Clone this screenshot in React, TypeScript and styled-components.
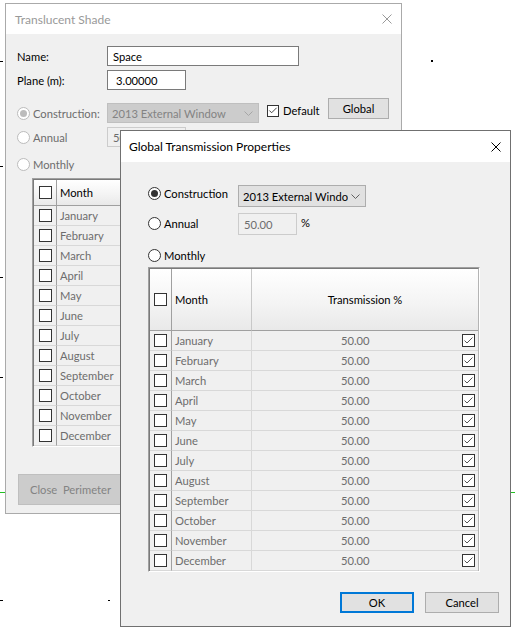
import React from "react";
import styled, { createGlobalStyle, css } from "styled-components";

const FONT = `Lato, "Noto Sans", sans-serif`;

const GlobalStyle = createGlobalStyle`
  html, body { margin: 0; padding: 0; background: #ffffff; }
  body { font-family: ${FONT}; font-size: 11.2px; color: #000000; }
  * { box-sizing: border-box; }
`;

const MONTHS = [
  "January", "February", "March", "April", "May", "June",
  "July", "August", "September", "October", "November", "December",
];

/* ---------- desktop canvas ---------- */

const Desktop = styled.div`
  position: relative;
  width: 515px;
  height: 630px;
  overflow: hidden;
  background: #ffffff;
`;

const Mark = styled.span<{ $x: number; $y: number; $w: number; $h: number; $c?: string }>`
  position: absolute;
  left: ${(p) => p.$x}px;
  top: ${(p) => p.$y}px;
  width: ${(p) => p.$w}px;
  height: ${(p) => p.$h}px;
  background: ${(p) => p.$c ?? "#000000"};
`;

/* ---------- window chrome ---------- */

const Window = styled.section<{ $x: number; $y: number; $w: number; $h: number; $active?: boolean }>`
  position: absolute;
  left: ${(p) => p.$x}px;
  top: ${(p) => p.$y}px;
  width: ${(p) => p.$w}px;
  height: ${(p) => p.$h}px;
  display: flex;
  flex-direction: column;
  background: #f0f0f0;
  border: 1px solid ${(p) => (p.$active ? "#707070" : "#aaaaaa")};
`;

const TitleBar = styled.header<{ $h: number; $active?: boolean }>`
  flex: 0 0 ${(p) => p.$h}px;
  display: flex;
  align-items: center;
  justify-content: space-between;
  padding: 0 9px 0 ${(p) => (p.$active ? 8 : 9)}px;
  background: #ffffff;
  color: ${(p) => (p.$active ? "#000000" : "#999999")};
  font-size: 12px;
`;

const CloseGlyph = ({ color }: { color: string }) => (
  <svg width="10" height="10" viewBox="0 0 10 10">
    <path d="M0.5 0.5 L9.5 9.5 M9.5 0.5 L0.5 9.5" stroke={color} strokeWidth="1" fill="none" />
  </svg>
);

const Body = styled.div<{ $pt: number; $pl: number }>`
  flex: 1;
  display: flex;
  flex-direction: column;
  align-items: flex-start;
  padding: ${(p) => p.$pt}px 0 0 ${(p) => p.$pl}px;
`;

/* ---------- form pieces ---------- */

const Row = styled.div<{ $h: number; $mt?: number; $align?: string }>`
  display: flex;
  align-items: ${(p) => p.$align ?? "center"};
  height: ${(p) => p.$h}px;
  margin-top: ${(p) => p.$mt ?? 0}px;
`;

const FieldLabel = styled.label<{ $w: number; $muted?: boolean; $mt?: number }>`
  display: flex;
  align-items: center;
  gap: 3px;
  width: ${(p) => p.$w}px;
  height: 16px;
  margin-top: ${(p) => p.$mt ?? 0}px;
  flex-shrink: 0;
  color: ${(p) => (p.$muted ? "#6d6d6d" : "#000000")};
  white-space: nowrap;
`;

const Radio = styled.span<{ $checked?: boolean; $disabled?: boolean }>`
  position: relative;
  flex: 0 0 13px;
  width: 13px;
  height: 13px;
  border-radius: 50%;
  border: 1px solid ${(p) => (p.$disabled ? "#bcbcbc" : "#333333")};
  background: #ffffff;
  ${(p) =>
    p.$checked &&
    css`
      &::after {
        content: "";
        position: absolute;
        left: 2px;
        top: 2px;
        width: 7px;
        height: 7px;
        border-radius: 50%;
        background: ${p.$disabled ? "#bcbcbc" : "#333333"};
      }
    `}
`;

const Box = styled.span<{ $size?: number }>`
  display: inline-flex;
  align-items: center;
  justify-content: center;
  flex: 0 0 ${(p) => p.$size ?? 13}px;
  width: ${(p) => p.$size ?? 13}px;
  height: ${(p) => p.$size ?? 13}px;
  border: 1px solid #333333;
  background: #ffffff;
`;

const Check = ({ checked, size, color = "#333333" }: { checked?: boolean; size?: number; color?: string }) => (
  <Box $size={size}>
    {checked && (
      <svg width="11" height="11" viewBox="0 0 11 11">
        <path d="M1.5 5.5 L4 8 L9.5 2.5" stroke={color} strokeWidth="1" fill="none" />
      </svg>
    )}
  </Box>
);

const TextBox = styled.div<{ $w: number; $h: number; $pad: number; $disabled?: boolean }>`
  display: flex;
  align-items: center;
  width: ${(p) => p.$w}px;
  height: ${(p) => p.$h}px;
  padding-left: ${(p) => p.$pad}px;
  border: 1px solid ${(p) => (p.$disabled ? "#cccccc" : "#7a7a7a")};
  background: ${(p) => (p.$disabled ? "#f0f0f0" : "#ffffff")};
  color: ${(p) => (p.$disabled ? "#6d6d6d" : "#000000")};
  white-space: nowrap;
  overflow: hidden;
`;

const Combo = styled.div<{ $w: number; $h: number; $disabled?: boolean; $self?: string }>`
  display: flex;
  align-items: center;
  align-self: ${(p) => p.$self ?? "auto"};
  width: ${(p) => p.$w}px;
  height: ${(p) => p.$h}px;
  padding: 0 5px 0 4px;
  border: 1px solid ${(p) => (p.$disabled ? "#bfbfbf" : "#adadad")};
  background: ${(p) => (p.$disabled ? "#cccccc" : "#e1e1e1")};
  color: ${(p) => (p.$disabled ? "#838383" : "#000000")};
`;

const ComboText = styled.span`
  flex: 1;
  overflow: hidden;
  white-space: nowrap;
`;

const Chevron = ({ color }: { color: string }) => (
  <svg width="9" height="5" viewBox="0 0 9 5" style={{ flexShrink: 0, marginLeft: 3 }}>
    <polyline points="0.5,0.5 4.5,4.5 8.5,0.5" stroke={color} strokeWidth="1" fill="none" />
  </svg>
);

const Button = styled.button<{
  $w: number;
  $h: number;
  $variant?: "default" | "primary" | "disabled";
  $self?: string;
  $ml?: number;
  $mt?: number;
}>`
  display: flex;
  align-items: center;
  justify-content: ${(p) => (p.$variant === "disabled" ? "flex-start" : "center")};
  align-self: ${(p) => p.$self ?? "auto"};
  width: ${(p) => p.$w}px;
  height: ${(p) => p.$h}px;
  margin: ${(p) => p.$mt ?? 0}px 0 0 ${(p) => p.$ml ?? 0}px;
  padding: 0 0 0 ${(p) => (p.$variant === "disabled" ? 11 : 0)}px;
  font: inherit;
  white-space: pre;
  background: ${(p) => (p.$variant === "disabled" ? "#cccccc" : "#e1e1e1")};
  color: ${(p) => (p.$variant === "disabled" ? "#838383" : "#000000")};
  border: ${(p) =>
    p.$variant === "primary"
      ? "2px solid #0078d7"
      : p.$variant === "disabled"
      ? "1px solid #bfbfbf"
      : "1px solid #adadad"};
`;

const DefaultToggle = styled.label`
  display: flex;
  align-items: center;
  gap: 4px;
  width: 61px;
  margin-left: 8px;
  white-space: nowrap;
`;

const Percent = styled.span`
  margin-left: 4px;
  line-height: 20px;
`;

/* ---------- grid table ---------- */

const TableFrame = styled.div<{ $w: number; $mt: number; $ml?: number }>`
  width: ${(p) => p.$w}px;
  margin-top: ${(p) => p.$mt}px;
  margin-left: ${(p) => p.$ml ?? 0}px;
  border: 1px solid;
  border-color: #a0a0a0 #ffffff #ffffff #a0a0a0;
`;

const TableGrid = styled.div<{ $cols: string }>`
  display: grid;
  grid-template-columns: ${(p) => p.$cols};
  border-top: 1px solid #7a7a7a;
  border-left: 1px solid #7a7a7a;
  border-right: 1px solid #b4b4b4;
  background: #f0f0f0;
`;

const HeadCell = styled.div<{ $h: number; $center?: boolean; $last?: boolean }>`
  display: flex;
  align-items: center;
  justify-content: ${(p) => (p.$center ? "center" : "flex-start")};
  height: ${(p) => p.$h}px;
  padding-left: ${(p) => (p.$center ? 0 : 3)}px;
  background: linear-gradient(#ffffff, #f4f4f4 55%, #e9e9e9);
  border-bottom: 1px solid #a0a0a0;
  border-right: ${(p) => (p.$last ? "none" : "1px solid #c8c8c8")};
  color: #000000;
  white-space: nowrap;
`;

const HeadCheckCell = styled(HeadCell)`
  justify-content: center;
  padding-left: 0;
  border-right: 1px solid #a0a0a0;
`;

const Cell = styled.div<{ $muted?: boolean; $center?: boolean; $last?: boolean }>`
  display: flex;
  align-items: center;
  justify-content: ${(p) => (p.$center ? "center" : "flex-start")};
  height: 20px;
  padding-left: ${(p) => (p.$center ? 0 : 3)}px;
  border-bottom: 1px solid #d8d8d8;
  border-right: ${(p) => (p.$last ? "none" : "1px solid #d8d8d8")};
  color: ${(p) => (p.$muted ? "#6d6d6d" : "#000000")};
  white-space: nowrap;
`;

const CheckCell = styled(Cell)`
  justify-content: center;
  padding-left: 0;
  border-right: 1px solid #a0a0a0;
`;

const ValueCell = styled(Cell)`
  position: relative;
  justify-content: flex-start;
  padding-left: 89px;
`;

const ValueCheck = styled.span`
  position: absolute;
  right: 3px;
  top: 3px;
  display: flex;
`;

/* ---------- dialogs ---------- */

function TranslucentShade() {
  return (
    <Window $x={5} $y={3} $w={397} $h={511}>
      <TitleBar $h={30}>
        <span>Translucent Shade</span>
        <CloseGlyph color="#999999" />
      </TitleBar>
      <Body $pt={12} $pl={11}>
        <Row $h={20}>
          <FieldLabel $w={90}>Name:</FieldLabel>
          <TextBox $w={192} $h={20} $pad={5}>Space</TextBox>
        </Row>
        <Row $h={20} $mt={4}>
          <FieldLabel $w={90}>Plane (m):</FieldLabel>
          <TextBox $w={79} $h={20} $pad={8}>3.00000</TextBox>
        </Row>
        <Row $h={25} $mt={8}>
          <FieldLabel $w={90} $muted $mt={5}>
            <Radio $checked $disabled />
            Construction:
          </FieldLabel>
          <Combo $w={152} $h={20} $disabled $self="flex-end">
            <ComboText>2013 External Window</ComboText>
            <Chevron color="#a6a6a6" />
          </Combo>
          <DefaultToggle>
            <Check checked size={12} />
            Default
          </DefaultToggle>
          <Button $w={61} $h={21} $self="flex-start">Global</Button>
        </Row>
        <Row $h={20} $mt={4}>
          <FieldLabel $w={90} $muted>
            <Radio $disabled />
            Annual
          </FieldLabel>
          <TextBox $w={79} $h={20} $pad={5} $disabled>50.00</TextBox>
        </Row>
        <Row $h={18} $mt={8}>
          <FieldLabel $w={90} $muted>
            <Radio $disabled />
            Monthly
          </FieldLabel>
        </Row>
        <TableFrame $w={360} $mt={5} $ml={15}>
          <TableGrid $cols="23px 90px 1fr">
            <HeadCheckCell $h={26}>
              <Check />
            </HeadCheckCell>
            <HeadCell $h={26}>Month</HeadCell>
            <HeadCell $h={26} $center $last>Transmission %</HeadCell>
            {MONTHS.map((m) => (
              <React.Fragment key={m}>
                <CheckCell>
                  <Check />
                </CheckCell>
                <Cell $muted>{m}</Cell>
                <Cell $muted $center $last>50.00</Cell>
              </React.Fragment>
            ))}
          </TableGrid>
        </TableFrame>
        <Button $w={130} $h={31} $variant="disabled" $ml={1} $mt={27}>
          {"Close  Perimeter"}
        </Button>
      </Body>
    </Window>
  );
}

const ButtonBar = styled.div`
  display: flex;
  justify-content: flex-end;
  gap: 11px;
  align-self: stretch;
  margin-top: 20px;
  padding-right: 11px;
`;

function GlobalTransmission() {
  return (
    <Window $x={120} $y={130} $w={391} $h={497} $active>
      <TitleBar $h={31} $active>
        <span>Global Transmission Properties</span>
        <CloseGlyph color="#000000" />
      </TitleBar>
      <Body $pt={23} $pl={27}>
        <Row $h={22} $align="flex-start">
          <FieldLabel $w={90}>
            <Radio $checked />
            Construction
          </FieldLabel>
          <Combo $w={128} $h={22}>
            <ComboText>2013 External Window</ComboText>
            <Chevron color="#606060" />
          </Combo>
        </Row>
        <Row $h={22} $mt={6} $align="flex-start">
          <FieldLabel $w={90} $mt={2}>
            <Radio />
            Annual
          </FieldLabel>
          <TextBox $w={59} $h={22} $pad={5} $disabled>50.00</TextBox>
          <Percent>%</Percent>
        </Row>
        <Row $h={16} $mt={12}>
          <FieldLabel $w={90}>
            <Radio />
            Monthly
          </FieldLabel>
        </Row>
        <TableFrame $w={332} $mt={4}>
          <TableGrid $cols="22px 80px 1fr">
            <HeadCheckCell $h={62}>
              <Check />
            </HeadCheckCell>
            <HeadCell $h={62}>Month</HeadCell>
            <HeadCell $h={62} $center $last>Transmission %</HeadCell>
            {MONTHS.map((m) => (
              <React.Fragment key={m}>
                <CheckCell>
                  <Check />
                </CheckCell>
                <Cell $muted>{m}</Cell>
                <ValueCell $muted $last>
                  50.00
                  <ValueCheck>
                    <Check checked color="#555555" />
                  </ValueCheck>
                </ValueCell>
              </React.Fragment>
            ))}
          </TableGrid>
        </TableFrame>
        <ButtonBar>
          <Button $w={74} $h={21} $variant="primary">OK</Button>
          <Button $w={74} $h={21}>Cancel</Button>
        </ButtonBar>
      </Body>
    </Window>
  );
}

export default function App() {
  return (
    <>
      <GlobalStyle />
      <Desktop>
        <Mark $x={0} $y={492} $w={515} $h={1} $c="#22c022" />
        <Mark $x={0} $y={61} $w={3} $h={1} />
        <Mark $x={0} $y={166} $w={3} $h={1} />
        <Mark $x={0} $y={277} $w={3} $h={1} />
        <Mark $x={0} $y={377} $w={3} $h={1} />
        <Mark $x={0} $y={600} $w={3} $h={1} />
        <Mark $x={108} $y={600} $w={2} $h={1} />
        <Mark $x={431} $y={60} $w={2} $h={2} />
        <TranslucentShade />
        <GlobalTransmission />
      </Desktop>
    </>
  );
}
